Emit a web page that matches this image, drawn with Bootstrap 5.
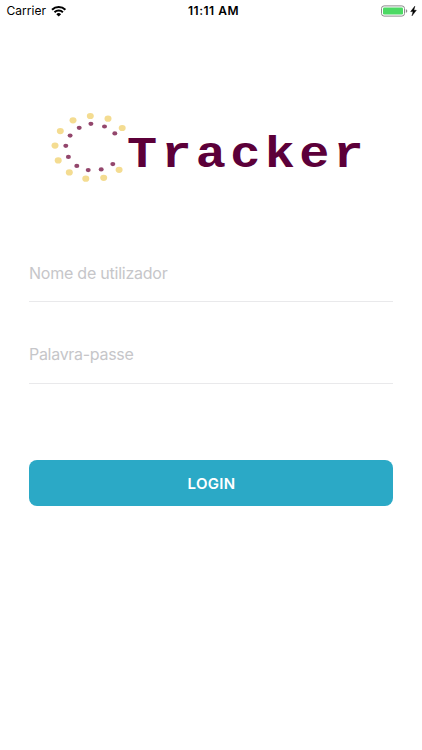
<!DOCTYPE html>
<html lang="pt">
<head>
<meta charset="utf-8">
<meta name="viewport" content="width=device-width, initial-scale=1">
<title>Tracker</title>
<link href="https://cdn.jsdelivr.net/npm/bootstrap@5.3.0/dist/css/bootstrap.min.css" rel="stylesheet">
<style>
body{font-family:Inter,"Liberation Sans",sans-serif;background:#fff;height:750px;overflow:hidden}
.statusbar{height:22px;padding:0 4px 0 6px;font-size:12px;line-height:22px;color:#000}
.statusbar>div{flex:1 1 0}
.carrier{padding-left:.6px}
.clock{font-weight:600;letter-spacing:.5px;padding-left:3px}
.logo{margin-top:83px;height:85px}
.logo text{font-family:"Liberation Mono",monospace;font-weight:700;font-size:44px;fill:#5c0039}
.login-form{margin:61px 29px 0}
.line-field{height:51px;border-bottom:1px solid #e9e9eb!important;font-size:16px;line-height:24px;letter-spacing:-.23px;padding:10px 0 16px}
.line-field+.line-field{margin-top:31px;padding:9px 0 17px;letter-spacing:-.3px}
.line-field::placeholder{color:#c6c6c9;opacity:1}
.btn-login{height:46.5px;margin-top:75.5px;border-radius:8px;background:#2ba9c6;color:#fff;font-size:15px;font-weight:600;letter-spacing:.3px;padding:2px 0 0 1px}
.btn-login:hover{background:#2496b0;color:#fff}
</style>
</head>
<body>
<header class="statusbar d-flex align-items-center">
  <div class="d-flex align-items-center"><span class="carrier">Carrier</span>
    <svg width="17" height="12" viewBox="-.7 0 17 12" class="ms-1" aria-hidden="true"><g fill="none" stroke="#000" stroke-width="2"><path d="M1.3 4.7a9.5 9.5 0 0 1 13.4 0"/><path d="M3.8 7.2a6 6 0 0 1 8.4 0"/></g><path d="M8 11.6 5.6 9.2a3.4 3.4 0 0 1 4.8 0z"/></svg>
  </div>
  <div class="clock text-center">11:11 AM</div>
  <div class="d-flex justify-content-end">
    <svg width="37" height="12" viewBox="0 0 37 12" aria-hidden="true"><rect x=".5" y=".9" width="23" height="10.2" rx="2.6" fill="#fff" stroke="#8b8b8b"/><rect x="2" y="2.4" width="20" height="7.2" rx="1.3" fill="#4cd964"/><path d="M24.8 4.2q1.5.3 1.5 1.8t-1.5 1.8z" fill="#8b8b8b"/><path stroke="#000" stroke-width=".5" d="M33.8 1.2 29.7 6.6h2.4l-1.1 4.2 4.3-5.5h-2.5z"/></svg>
  </div>
</header>
<main>
  <svg class="logo d-block" width="422" height="85" viewBox="0 105 422 85" role="img" aria-label="Tracker">
    <g fill="#f4dc91">
      <ellipse cx="90.3" cy="116" rx="3.5" ry="3.1"/><ellipse cx="73" cy="120.3" rx="3.5" ry="3.1"/><ellipse cx="108" cy="118.7" rx="3.5" ry="3.1"/><ellipse cx="122.2" cy="128" rx="3.5" ry="3.1"/><ellipse cx="60.3" cy="131.1" rx="3.5" ry="3.1"/><ellipse cx="55" cy="145.6" rx="3.5" ry="3.1"/><ellipse cx="58.2" cy="160.4" rx="3.5" ry="3.1"/><ellipse cx="69.3" cy="172.4" rx="3.5" ry="3.1"/><ellipse cx="85.8" cy="178.7" rx="3.5" ry="3.1"/><ellipse cx="103.7" cy="177.8" rx="3.5" ry="3.1"/><ellipse cx="119.1" cy="169.8" rx="3.5" ry="3.1"/>
    </g>
    <g fill="#93466c">
      <ellipse cx="90.9" cy="123.8" rx="2.5" ry="2.1"/><ellipse cx="104.5" cy="126.5" rx="2.5" ry="2.1"/><ellipse cx="114.8" cy="133.4" rx="2.5" ry="2.1"/><ellipse cx="79.2" cy="127.8" rx="2.5" ry="2.1"/><ellipse cx="70.1" cy="135.6" rx="2.5" ry="2.1"/><ellipse cx="65.8" cy="145.8" rx="2.5" ry="2.1"/><ellipse cx="68.4" cy="156.9" rx="2.5" ry="2.1"/><ellipse cx="76.8" cy="165.9" rx="2.5" ry="2.1"/><ellipse cx="88.2" cy="170.1" rx="2.5" ry="2.1"/><ellipse cx="101.2" cy="169.4" rx="2.5" ry="2.1"/><ellipse cx="112.8" cy="164.1" rx="2.5" ry="2.1"/>
    </g>
    <text transform="translate(127 167) scale(1.14 1)" letter-spacing="3.8">Tracker</text>
  </svg>
  <form class="login-form">
    <input class="line-field form-control border-0 rounded-0 shadow-none bg-transparent" type="text" placeholder="Nome de utilizador" aria-label="Nome de utilizador">
    <input class="line-field form-control border-0 rounded-0 shadow-none bg-transparent" type="password" placeholder="Palavra-passe" aria-label="Palavra-passe">
    <button class="btn btn-login w-100 border-0 d-block" type="button">LOGIN</button>
  </form>
</main>
<script src="https://cdn.jsdelivr.net/npm/bootstrap@5.3.0/dist/js/bootstrap.bundle.min.js"></script>
</body>
</html>
